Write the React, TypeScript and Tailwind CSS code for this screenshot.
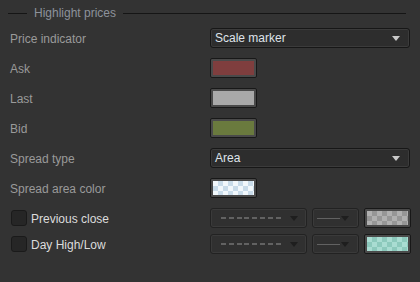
import React from "react";

const Arrow = ({ disabled }: { disabled?: boolean }) => (
  <svg width="8" height="5" viewBox="0 0 8 5" className="shrink-0">
    <path d="M0 0H8L4 5Z" fill={disabled ? "#1e1e1e" : "#c8c8c8"} />
  </svg>
);

function Select({ value }: { value: string }) {
  return (
    <div className="flex h-[20px] w-[200px] items-center justify-between rounded-[3px] border border-[#171717] bg-[#2d2d2d] pl-[4px] pr-[9px] text-[12px] text-[#dfe3ea] shadow-[inset_0_0_0_1px_#3b3b3b]">
      <span>{value}</span>
      <Arrow />
    </div>
  );
}

function Swatch({ fill, checker }: { fill?: string; checker?: [string, string] }) {
  const style = checker
    ? {
        backgroundColor: checker[0],
        backgroundImage: `linear-gradient(45deg, ${checker[1]} 25%, transparent 25%, transparent 75%, ${checker[1]} 75%), linear-gradient(45deg, ${checker[1]} 25%, transparent 25%, transparent 75%, ${checker[1]} 75%)`,
        backgroundSize: "10px 10px",
        backgroundPosition: "0 0, 5px 5px",
      }
    : { backgroundColor: fill };
  return (
    <div className="h-[20px] w-[47px] rounded-[2px] border border-[#181818] bg-[#4a4a4a] p-[2px]">
      <div className="h-full w-full" style={style} />
    </div>
  );
}

function Row({ label, children }: { label: string; children: React.ReactNode }) {
  return (
    <div className="flex h-[20px] items-center">
      <div className="w-[200px] pt-[2px] text-[12px] text-[#9a9a9a]">{label}</div>
      {children}
    </div>
  );
}

function LineStyleRow({ label, checker }: { label: string; checker: [string, string] }) {
  return (
    <div className="flex h-[20px] items-center">
      <div className="flex w-[200px] items-center gap-[4px] pl-[1px]">
        <div className="h-[16px] w-[16px] rounded-[3px] border border-[#1a1a1a] bg-[#262626]" />
        <span className="pt-[1px] text-[12px] text-[#dcdcdc]">{label}</span>
      </div>
      <div className="flex items-center gap-[5px]">
        <div className="flex h-[20px] w-[97px] items-center justify-between rounded-[3px] border border-[#222] bg-[#303030] pl-[10px] pr-[8px] shadow-[inset_0_0_0_1px_#3a3a3a]">
          <div className="h-[2px] w-[62px] bg-[repeating-linear-gradient(90deg,#626262_0px,#626262_5px,transparent_5px,transparent_7.8px)]" />
          <Arrow disabled />
        </div>
        <div className="flex h-[20px] w-[47px] items-center justify-between rounded-[3px] border border-[#222] bg-[#303030] pl-[4px] pr-[9px] shadow-[inset_0_0_0_1px_#3a3a3a]">
          <div className="h-[1px] w-[23px] bg-[#626262]" />
          <Arrow disabled />
        </div>
        <Swatch checker={checker} />
      </div>
    </div>
  );
}

export default function App() {
  return (
    <div className="h-[282px] w-[420px] bg-[#333333] pl-[10px] font-['Liberation_Sans',Arial,sans-serif]">
      <div className="flex h-[28px] items-center pb-[2px] pr-[14px]">
        <div className="ml-[-2px] h-px w-[19px] bg-[#151515]" />
        <span className="px-[7px] text-[12px] text-[#8d929b]">Highlight prices</span>
        <div className="h-px flex-1 bg-[#151515]" />
      </div>
      <div className="flex flex-col gap-[10px]">
        <Row label="Price indicator">
          <Select value="Scale marker" />
        </Row>
        <Row label="Ask">
          <Swatch fill="#7f3e3e" />
        </Row>
        <Row label="Last">
          <Swatch fill="#a9a9a9" />
        </Row>
        <Row label="Bid">
          <Swatch fill="#6a7a3e" />
        </Row>
        <Row label="Spread type">
          <Select value="Area" />
        </Row>
        <Row label="Spread area color">
          <Swatch checker={["#f2f8fc", "#c9dcea"]} />
        </Row>
      </div>
      <div className="mt-[10px] flex flex-col gap-[6px]">
        <LineStyleRow label="Previous close" checker={["#b0b0b0", "#969696"]} />
        <LineStyleRow label="Day High/Low" checker={["#a9dcd2", "#8cc9bc"]} />
      </div>
    </div>
  );
}
